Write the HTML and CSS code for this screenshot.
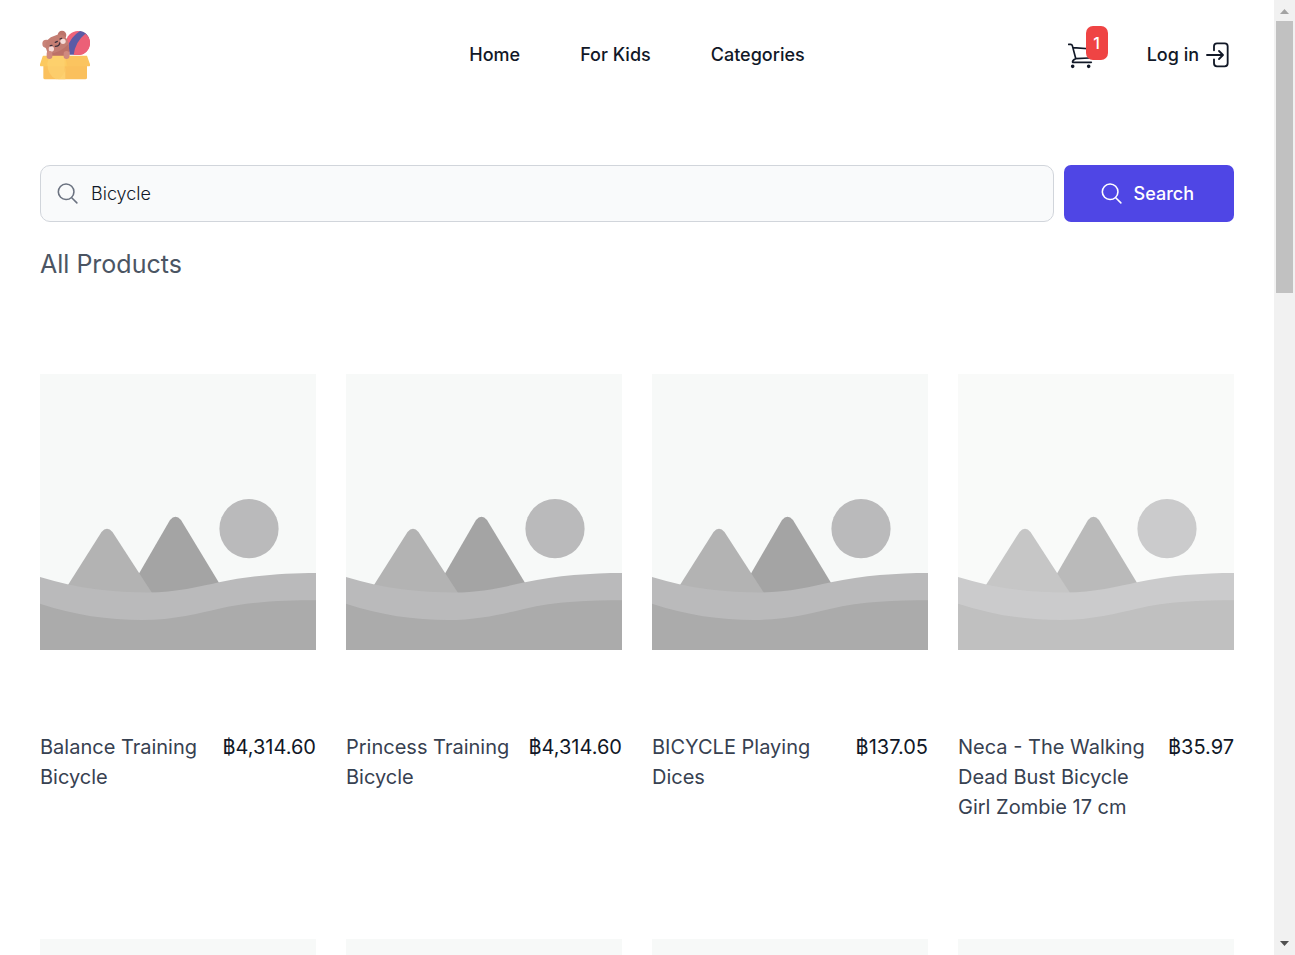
FILE: index.html
```
<!DOCTYPE html>
<html lang="en">
<head>
<meta charset="utf-8">
<title>All Products</title>
<link rel="stylesheet" href="styles.css">
</head>
<body>
<svg class="defs" aria-hidden="true">
  <symbol id="search" viewBox="0 0 24 24"><path d="M21 21l-5.200-5.200m0 0A7.500 7.500 0 1 0 5.200 5.200a7.500 7.500 0 0 0 10.600 10.600z" fill="none" stroke="currentColor" stroke-width="1.500" stroke-linecap="round" stroke-linejoin="round"/></symbol>
  <symbol id="landscape" viewBox="0 0 276 276">
    <rect width="276" height="276" fill="#f7f9f8"/>
    <circle cx="209" cy="154.700" r="29.600" fill="#bababb"/>
    <path d="M86 222L130 146Q135.500 139.500 141 146L187 222Z" fill="#a4a4a4"/>
    <path d="M21 222L61.500 158Q67 151.500 72.500 158L114 222Z" fill="#b3b3b3"/>
    <path d="M0 203C38 215 76 218.500 108 218.500C136 218.500 160 212.500 179 208.300C210 201.500 246 199 276 199V276H0Z" fill="#bababb"/>
    <path d="M0 229.700C34 241 68 246 102 246C134 246 160 239 179 234.700C208 227.500 246 226.300 276 226.300V276H0Z" fill="#ababab"/>
  </symbol>
</svg>
<div class="window">
  <div class="page">
    <header class="header">
      <div class="side">
        <a class="logo" href="#" aria-label="Toy shop">
          <svg viewBox="30 30 150 150">
            <circle cx="144" cy="69" r="36" fill="#f0647a"/>
            <path d="M150 33Q170 36 177 55Q145 60 133 104H118Q119 88 112 84Q120 52 150 33Z" fill="#5c5ba6"/>
            <path d="M166 41A36 36 0 0 1 150 105H131Q135 66 166 41Z" fill="#ec6077"/>
            <circle cx="49" cy="71" r="12" fill="#c98378"/>
            <circle cx="96" cy="45" r="13" fill="#bd746b"/>
            <path d="M45 80Q48 54 74 47Q99 36 111 58Q119 72 116 90V112H51Q55 95 45 80Z" fill="#c47e73"/>
            <path d="M58 100Q92 98 113 74Q120 84 118 112H54Z" fill="#bc7168"/>
            <circle cx="64" cy="87" r="8" fill="#f6dcd8"/>
            <circle cx="99" cy="64" r="8" fill="#f6dcd8"/>
            <path d="M76 79Q88 79 89 69M61 77l5-1M90 57l5-2M76 67l6-3" stroke="#40323d" stroke-width="4" stroke-linecap="round" fill="none"/>
            <path d="M40 108H171V173Q171 178 166 178H45Q40 178 40 173Z" fill="#fac05d"/>
            <path d="M40 107H106L114 139H35Q28 139 30 133L38 109Z" fill="#fcc95f"/>
            <path d="M106 107H171L180 133Q182 139 175 139H114Z" fill="#fbc45f"/>
            <path d="M106 107V178H84Q112 166 106 107Z" fill="#fdd071"/>
            <path d="M58 108H104V146Q104 178 78 178Q52 165 52 130Z" fill="#fed574" opacity=".6"/>
            <rect x="50" y="93" width="17" height="24" rx="8" fill="#d0897e"/>
            <rect x="101" y="93" width="17" height="24" rx="8" fill="#d0897e"/>
          </svg>
        </a>
      </div>
      <nav class="nav">
        <a href="#">Home</a>
        <a href="#">For Kids</a>
        <a href="#">Categories</a>
      </nav>
      <div class="side actions">
        <a class="cart" href="#" aria-label="Cart">
          <svg viewBox="54 78 78 81" fill="none" stroke="#111827" stroke-width="5" stroke-linecap="round" stroke-linejoin="round">
            <path d="M56 85H62Q66 85 67 89L77 127M69 95L126 99L121 123Q121 126 117 126L77 128Q66 133 68 139H124"/>
            <circle cx="68" cy="151" r="3" fill="#111827"/><circle cx="116" cy="151" r="3" fill="#111827"/>
          </svg>
          <span class="badge">1</span>
        </a>
        <a class="login" href="#">Log in
          <svg viewBox="468 81 72 78" fill="none" stroke="#111827" stroke-width="5.500" stroke-linecap="round" stroke-linejoin="round">
            <path d="M492 106V94Q492 85 501 85H524Q533 85 533 94V145Q533 154 524 154H501Q492 154 492 145V133M471 120H518M507 108L519 120L507 132"/>
          </svg>
        </a>
      </div>
    </header>
    <main class="main">
      <form class="search">
        <div class="field">
          <svg class="icon"><use href="#search"/></svg>
          <input type="text" aria-label="Search products" value="Bicycle">
        </div>
        <button type="submit"><svg class="icon"><use href="#search"/></svg>Search</button>
      </form>
      <h1>All Products</h1>
      <div class="products">
        <article class="card"><svg class="photo" viewBox="0 0 276 276"><use href="#landscape"/></svg><div class="info"><h2>Balance Training Bicycle</h2><p>฿4,314.60</p></div></article>
        <article class="card"><svg class="photo" viewBox="0 0 276 276"><use href="#landscape"/></svg><div class="info"><h2>Princess Training Bicycle</h2><p>฿4,314.60</p></div></article>
        <article class="card"><svg class="photo" viewBox="0 0 276 276"><use href="#landscape"/></svg><div class="info"><h2>BICYCLE Playing Dices</h2><p>฿137.05</p></div></article>
        <article class="card"><svg class="photo faded" viewBox="0 0 276 276"><use href="#landscape"/></svg><div class="info"><h2>Neca - The Walking Dead Bust Bicycle Girl Zombie 17 cm</h2><p>฿35.97</p></div></article>
        <article class="card"><svg class="photo" viewBox="0 0 276 276"><use href="#landscape"/></svg></article>
        <article class="card"><svg class="photo" viewBox="0 0 276 276"><use href="#landscape"/></svg></article>
        <article class="card"><svg class="photo" viewBox="0 0 276 276"><use href="#landscape"/></svg></article>
        <article class="card"><svg class="photo" viewBox="0 0 276 276"><use href="#landscape"/></svg></article>
      </div>
    </main>
  </div>
  <div class="scrollbar" aria-hidden="true">
    <svg viewBox="0 0 21 21"><path d="M6 14L10.500 9L15 14Z" fill="#a3a3a3"/></svg>
    <div class="thumb"></div>
    <svg class="down" viewBox="0 0 21 21"><path d="M6 7H15L10.500 12Z" fill="#505050"/></svg>
  </div>
</div>
</body>
</html>
```
FILE: styles.css
```
* { box-sizing: border-box; }
body {
  margin: 0;
  background: #fff;
  color: #111827;
  font-family: Inter, "Liberation Sans", sans-serif;
  font-size: 18px;
  line-height: 30px;
}
a { color: inherit; text-decoration: none; }
svg { display: block; }
h1, h2, p { margin: 0; font-weight: 400; }
.defs { position: absolute; width: 0; height: 0; }
.window { display: flex; height: 100vh; overflow: hidden; }
.page { flex: 1; min-width: 0; overflow: hidden; }

.header { display: flex; align-items: center; padding: 30px 40px; font-weight: 500; }
.side { flex: 1; display: flex; }
.logo svg { width: 50px; height: 50px; }
.nav { display: flex; gap: 60px; }
.actions { justify-content: flex-end; align-items: center; gap: 39px; }
.cart { position: relative; padding-right: 14px; }
.cart svg { width: 26px; height: 27px; }
.badge {
  position: absolute;
  top: -16px;
  right: 0;
  width: 22px;
  height: 34px;
  border-radius: 7px;
  background: #ef4444;
  color: #fff;
  font-size: 16px;
  line-height: 34px;
  text-align: center;
}
.login { display: flex; align-items: center; gap: 7px; padding-right: 4px; }
.login svg { width: 24px; height: 26px; }

.main { padding: 55px 40px 0; }
.search { display: flex; gap: 10px; height: 57px; }
.field { position: relative; flex: 1; }
.icon { width: 25px; height: 25px; }
.field .icon { position: absolute; left: 15px; top: 16px; color: #6b7280; }
.field input {
  width: 100%;
  height: 100%;
  padding: 0 20px 0 50px;
  border: 1px solid #d1d5db;
  border-radius: 10px;
  background: #f9fafb;
  color: #111827;
  font: inherit;
  font-weight: 300;
}
.search button {
  display: flex;
  align-items: center;
  gap: 10px;
  padding: 0 40px 0 35px;
  border: 0;
  border-radius: 7px;
  background: #4f46e5;
  color: #fff;
  font: inherit;
  font-weight: 500;
}
h1 { margin: 25px 0 92px; font-size: 25px; line-height: 35px; color: #4b5563; }
.products { display: grid; grid-template-columns: repeat(4, minmax(0, 1fr)); gap: 117px 30px; }
.photo { width: 100%; height: auto; }
.faded { opacity: 0.75; }
.info { display: flex; justify-content: space-between; gap: 15px; margin-top: 82px; font-size: 20px; }
.info h2 { font-size: 20px; color: #374151; }

.scrollbar { display: flex; flex-direction: column; width: 21px; background: #f1f1f1; }
.scrollbar svg { width: 21px; height: 21px; }
.thumb { height: 30vh; max-height: 272px; margin: 0 2px; background: #c1c1c1; }
.down { margin-top: auto; }
```
